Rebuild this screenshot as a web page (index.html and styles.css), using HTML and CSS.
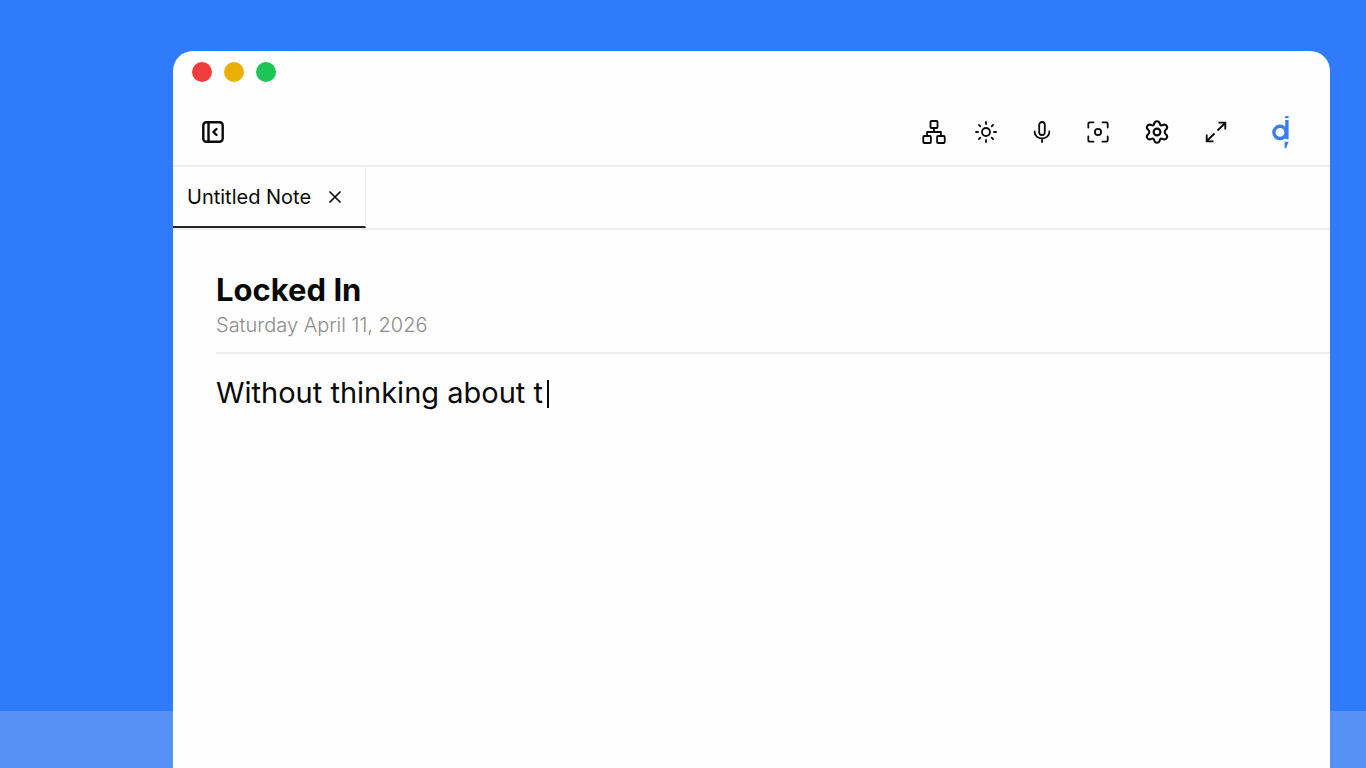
FILE: index.html
```html
<!DOCTYPE html>
<html lang="en">
<head>
    <meta charset="UTF-8">
    <meta name="viewport" content="width=device-width, initial-scale=1.0">
    <title>Untitled Note</title>
    <link rel="stylesheet" href="styles.css">
</head>
<body>
    <div class="dock"></div>

    <main class="window">
        <div class="titlebar">
            <span class="dot red"></span>
            <span class="dot yellow"></span>
            <span class="dot green"></span>
        </div>

        <header class="toolbar">
            <button class="icon-button" type="button" aria-label="Collapse sidebar">
                <svg width="22" height="22" viewBox="0 0 22 22" stroke-width="2.4">
                    <rect x="1.3" y="1.3" width="19.4" height="19.4" rx="3"/>
                    <path d="M6.5 1.5v19M14.5 8 11.4 11l3.1 3"/>
                </svg>
            </button>

            <nav class="tools">
                <div class="tool-group">
                    <button class="icon-button" type="button" aria-label="Structure">
                        <svg width="24" height="24" viewBox="0 0 24 24" stroke-width="1.8">
                            <rect x="8.5" y="1" width="7" height="7" rx="1"/>
                            <rect x="1.3" y="16" width="7.6" height="7" rx="1"/>
                            <rect x="15.1" y="16" width="7.6" height="7" rx="1"/>
                            <path d="M12 8v4M5.1 16v-4h13.8v4"/>
                        </svg>
                    </button>
                    <button class="icon-button" type="button" aria-label="Theme">
                        <svg width="22" height="22" viewBox="0 0 22 22" stroke-width="1.8">
                            <circle cx="11" cy="11" r="4"/>
                            <path d="M11 1v2M11 19v2M1 11h2M19 11h2M4 4l1.3 1.3M16.7 16.7 18 18M4 18l1.3-1.3M16.7 5.3 18 4"/>
                        </svg>
                    </button>
                </div>
                <button class="icon-button" type="button" aria-label="Dictate">
                    <svg width="18" height="22" viewBox="0 0 18 22" stroke-width="1.8">
                        <rect x="6.2" y="1" width="5.6" height="13" rx="2.8"/>
                        <path d="M1.7 10.5v.8a7.3 6.2 0 0 0 14.6 0v-.8M9 17.5V21"/>
                    </svg>
                </button>
                <button class="icon-button" type="button" aria-label="Focus">
                    <svg width="22" height="22" viewBox="0 0 22 22" stroke-width="1.8">
                        <circle cx="11" cy="11" r="3.1"/>
                        <path d="M1.3 6.5V2.8a1.5 1.5 0 0 1 1.5-1.5h3.7M15.5 1.3h3.7a1.5 1.5 0 0 1 1.5 1.5v3.7M20.7 15.5v3.7a1.5 1.5 0 0 1-1.5 1.5h-3.7M6.5 20.7H2.8a1.5 1.5 0 0 1-1.5-1.5v-3.7"/>
                    </svg>
                </button>
                <button class="icon-button" type="button" aria-label="Settings">
                    <svg width="24" height="24" viewBox="0 0 24 24" stroke-width="2.1">
                        <path d="M9.2 4C9.4 2.2 10.4 1.3 12 1.3S14.6 2.2 14.8 4C15.2 5.2 16.3 5.7 17.5 5.1C19.3 4.3 20.9 4.7 21.7 6S22.1 8.8 20.6 9.9C19.4 11 19.4 13 20.6 14.1C22.1 15.2 22.5 16.7 21.7 18S19.3 19.7 17.5 18.9C16.3 18.3 15.2 18.8 14.8 20C14.6 21.8 13.6 22.7 12 22.7S9.4 21.8 9.2 20C8.8 18.8 7.7 18.3 6.5 18.9C4.7 19.7 3.1 19.3 2.3 18S1.9 15.2 3.4 14.1C4.6 13 4.6 11 3.4 9.9C1.9 8.8 1.5 7.3 2.3 6S4.7 4.3 6.5 5.1C7.7 5.7 8.8 5.2 9.2 4Z"/>
                        <circle cx="12" cy="12" r="3.4"/>
                    </svg>
                </button>
                <button class="icon-button" type="button" aria-label="Full screen">
                    <svg class="square" width="22" height="22" viewBox="0 0 22 22" stroke-width="1.8">
                        <path d="M12.5 9.5l7.7-7.5M13.5 1.7h6.8v6.8M9.5 12.5l-7.7 7.5M8.5 20.3H1.7v-6.8"/>
                    </svg>
                </button>
                <a class="brand" href="#" aria-label="Home">
                    <svg width="18" height="34" viewBox="0 0 18 34" stroke-width="3.4">
                        <circle cx="8" cy="17.4" r="6.1"/>
                        <path class="square" d="M14.9 5v19.2"/>
                        <path class="solid" d="M13.2 1h3.4v2.2h-3.4zM12.6 26.7h4l-2.5 6.2h-1.5z"/>
                    </svg>
                </a>
            </nav>
        </header>

        <div class="tabs">
            <div class="tab">
                <span>Untitled Note</span>
                <button class="icon-button" type="button" aria-label="Close tab">
                    <svg width="12" height="12" viewBox="0 0 12 12" stroke-width="1.7">
                        <path d="M1 1l10 10M11 1 1 11"/>
                    </svg>
                </button>
            </div>
        </div>

        <article class="note">
            <div class="note-head">
                <h1>Locked In</h1>
                <time datetime="2026-04-11">Saturday April 11, 2026</time>
            </div>
            <div class="note-body" role="textbox" aria-multiline="true" aria-label="Note" contenteditable="true" spellcheck="false">Without thinking about t<span class="caret"></span></div>
        </article>
    </main>
</body>
</html>
```
FILE: styles.css
```css
* {
    box-sizing: border-box;
}

body {
    margin: 0;
    min-height: 100vh;
    display: flex;
    padding: 51px 36px 0 173px;
    overflow: hidden;
    background: #307bf9;
    color: #090909;
    font-family: Inter, "Liberation Sans", sans-serif;
}

/* Strip behind the window */
.dock {
    position: absolute;
    left: 0;
    right: 0;
    bottom: 0;
    height: 57px;
    background: #5691f5;
}

.window {
    position: relative;
    flex: 1;
    background: #fefefe;
    border-radius: 20px 20px 0 0;
}

/* Title bar */
.titlebar {
    display: flex;
    gap: 12px;
    padding: 11px 19px 0;
}

.dot {
    width: 20px;
    height: 20px;
    border-radius: 50%;
}

.red {
    background: #ef3c3c;
}

.yellow {
    background: #e9b004;
}

.green {
    background: #1bc557;
}

/* Toolbar */
.toolbar {
    display: flex;
    align-items: center;
    justify-content: space-between;
    height: 85px;
    padding: 16px 40px 0 29px;
    border-bottom: 2px solid #eeeeee;
}

.tools {
    display: flex;
    align-items: center;
    gap: 36px;
}

.tool-group {
    display: flex;
    align-items: center;
    gap: 29px;
}

.icon-button {
    display: flex;
    padding: 0;
    border: none;
    background: none;
    color: inherit;
    cursor: pointer;
}

svg {
    fill: none;
    stroke: currentColor;
    stroke-linecap: round;
    stroke-linejoin: round;
}

.square {
    stroke-linecap: butt;
    stroke-linejoin: miter;
}

.brand {
    display: flex;
    margin-left: 9px;
    color: #397fe9;
}

.solid {
    fill: currentColor;
    stroke: none;
}

/* Tabs */
.tabs {
    display: flex;
    height: 63px;
    border-bottom: 2px solid #eeeeee;
}

.tab {
    display: flex;
    align-items: center;
    gap: 18px;
    height: 61px;
    padding: 0 24px 0 14px;
    border-right: 1px solid #eeeeee;
    border-bottom: 2px solid #222222;
    font-size: 20px;
}

/* Note */
.note {
    padding-left: 43px;
}

.note-head {
    padding: 42px 0 10px;
    border-bottom: 2px solid #eeeeee;
}

h1 {
    margin: 0;
    font-size: 31px;
    line-height: 36px;
    font-weight: 700;
}

time {
    display: block;
    color: #8c8c8c;
    font-size: 20px;
    line-height: 34px;
    font-weight: 300;
}

.note-body {
    padding-top: 19px;
    font-size: 29px;
    line-height: 40px;
    outline: none;
}

.caret {
    display: inline-block;
    width: 2px;
    height: 28px;
    margin-left: 4px;
    vertical-align: -5px;
    background: #090909;
}
```
